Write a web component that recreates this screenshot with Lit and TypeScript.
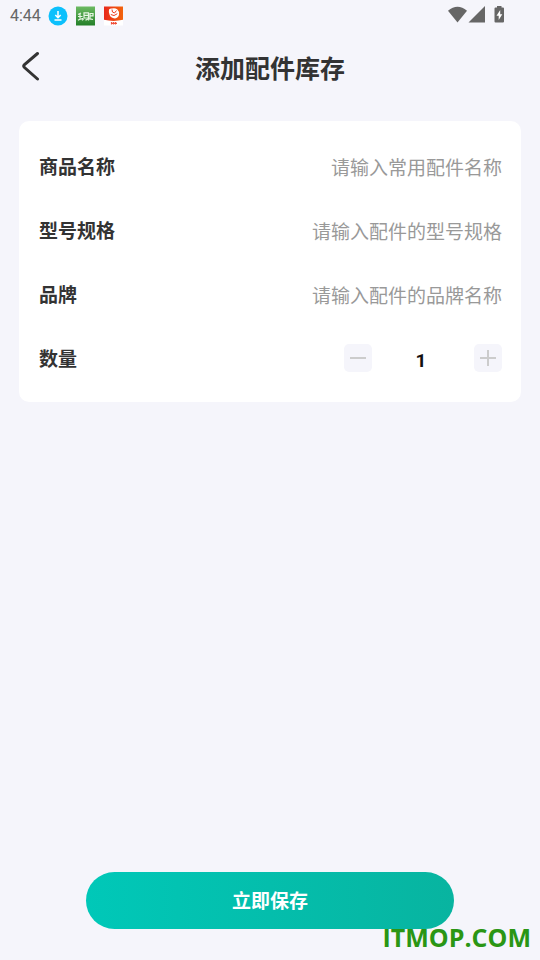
import { LitElement, html, css } from "lit";
import { customElement, property, state } from "lit/decorators.js";

@customElement("status-bar")
class StatusBar extends LitElement {
  static styles = css`
    :host {
      display: flex;
      align-items: center;
      height: 31px;
      padding: 0 32px 0 10px;
      color: #666666;
      font: 400 16px/32px Roboto, sans-serif;
    }
    .apps { display: flex; gap: 8px; margin-left: 7px; }
    .system { display: flex; margin-left: auto; padding-bottom: 2px; }
    svg { display: block; }
  `;

  render() {
    return html`
      <span>4:44</span>
      <div class="apps">
        <svg width="20" height="20" viewBox="0 0 20 20">
          <circle cx="10" cy="10" r="9.5" fill="#0cc0fc" />
          <path d="M10 5v6.500M7.300 9l2.700 2.700L12.700 9M6.500 14h7" fill="none" stroke="#fff" stroke-width="1.500" />
        </svg>
        <svg width="20" height="20" viewBox="0 0 20 20">
          <defs>
            <linearGradient id="leaf" x1="0" y1="0" x2="0" y2="1">
              <stop offset="0" stop-color="#6cba62" /><stop offset="1" stop-color="#237f28" />
            </linearGradient>
          </defs>
          <rect y="0.500" width="19" height="19" fill="url(#leaf)" />
          <path d="M2 8.500l3-1.500M4 7.500v5M2 10.500h4.500M8 6.800h4.500V12H8zM8 9.400h4.500M14 13V7.500h3v2.300h-3M2 14.300q3-2.300 6-1M9.500 14.300q3-2.300 7.500-.8M6.500 12v2.500M12.500 12v2.500" fill="none" stroke="#e8f6e4" stroke-width="1.200" />
        </svg>
        <svg width="20" height="20" viewBox="0 0 20 20">
          <defs>
            <linearGradient id="flame" x1="0" y1="0" x2="1" y2="0">
              <stop offset="0" stop-color="#e8271c" /><stop offset="1" stop-color="#f2640c" />
            </linearGradient>
          </defs>
          <rect y="0.500" width="19" height="19" fill="#fff" />
          <path d="M0 .5h19v13.300Q9.500 16 0 13.800z" fill="url(#flame)" />
          <path d="M5 3.500q1.500-1.500 3-1 3-.8 5.200.8 2.500 2.300 1.800 5.500-.8 3.200-4 3.600Q6.500 12.200 5.500 8.500 4.500 6 5 3.500z" fill="#fff" />
          <path d="M8 3.500q-.3 3.300 2.500 3.500l2-2.500M6.800 8.500q3.200 2.500 6.500-.8" fill="none" stroke="#ec3c1c" stroke-width="1" />
          <path d="M7.500 16v2.500M9.500 16v2.500M11.500 16v2.500M7 17.300h6" stroke="#f0503c" stroke-width="1.200" />
        </svg>
      </div>
      <div class="system">
        <svg width="60" height="20" viewBox="0 0 60 20" fill="#666666">
          <path d="M0 5.700Q9.500-2.300 19 5.700L9.500 17.500z" />
          <path d="M20.500 17.500 37 1v16.500z" />
          <path d="M49 1h4.500v1.500H55q1 0 1 1V16.500q0 1-1 1h-7.500q-1 0-1-1V3.500q0-1 1-1H49z" />
          <path d="M52.200 5 48.500 10.800h2.200V15l3.600-5.800h-2.100z" fill="#fff" />
        </svg>
      </div>
    `;
  }
}

@customElement("quantity-stepper")
class QuantityStepper extends LitElement {
  @property({ type: Number }) value = 1;

  static styles = css`
    :host { display: flex; align-items: center; justify-content: space-between; width: 158px; }
    button {
      width: 28px;
      height: 28px;
      padding: 0;
      border: 0;
      border-radius: 5px;
      background: #f5f5fb;
      cursor: pointer;
    }
    svg { display: block; margin: auto; }
    input {
      width: 60px;
      height: 28px;
      padding: 4px 4px 0 0;
      box-sizing: border-box;
      border: 0;
      background: none;
      color: #111111;
      text-align: center;
      font: 700 19px/24px Roboto, sans-serif;
    }
  `;

  private step(delta: number) {
    this.value = Math.max(1, this.value + delta);
  }

  render() {
    return html`
      <button type="button" aria-label="减少" @click=${() => this.step(-1)}>
        <svg width="16" height="16" viewBox="0 0 16 16"><path d="M0 8h16" stroke="#cccccc" stroke-width="2" /></svg>
      </button>
      <input aria-label="数量" inputmode="numeric" .value=${String(this.value)} />
      <button type="button" aria-label="增加" @click=${() => this.step(1)}>
        <svg width="16" height="16" viewBox="0 0 16 16"><path d="M0 8h16M8 0v16" stroke="#cccccc" stroke-width="2" /></svg>
      </button>
    `;
  }
}

@customElement("app-root")
class AppRoot extends LitElement {
  @state() private fields = [
    { id: "name", label: "商品名称", hint: "请输入常用配件名称" },
    { id: "spec", label: "型号规格", hint: "请输入配件的型号规格" },
    { id: "brand", label: "品牌", hint: "请输入配件的品牌名称" },
  ];

  static styles = css`
    :host {
      display: flex;
      flex-direction: column;
      position: relative;
      min-height: 100vh;
      box-sizing: border-box;
      background: #f5f5fb;
      color: #333333;
      font-family: "Noto Sans CJK SC", sans-serif;
    }
    header {
      display: grid;
      grid-template-columns: 60px 1fr 60px;
      align-items: center;
      height: 70px;
    }
    .back {
      width: 60px;
      height: 60px;
      padding: 0;
      border: 0;
      background: none;
      cursor: pointer;
    }
    .back svg { display: block; margin: auto; }
    h1 {
      margin: 0;
      padding-top: 2px;
      text-align: center;
      font-size: 25px;
      line-height: 36px;
      font-weight: 700;
    }
    form { display: flex; flex-direction: column; flex: 1; }
    .card {
      margin: 20px 19px 0;
      padding: 13px 19px 12px 20px;
      border-radius: 10px;
      background: #ffffff;
    }
    .row {
      display: flex;
      align-items: center;
      justify-content: space-between;
      gap: 20px;
      height: 64px;
      font-size: 19px;
      line-height: 28px;
    }
    .label { font-weight: 700; }
    .text {
      flex: 1;
      min-width: 0;
      height: 32px;
      padding: 0;
      border: 0;
      background: none;
      color: #333333;
      font: inherit;
      text-align: right;
    }
    .text::placeholder { color: #999999; opacity: 1; }
    .save {
      width: 68%;
      height: 57px;
      margin: auto auto 31px;
      padding: 0 0 2px;
      border: 0;
      border-radius: 29px;
      background: linear-gradient(90deg, #00c8b8, #08b4a0);
      color: #ffffff;
      font: 700 19px/28px "Noto Sans CJK SC", sans-serif;
      cursor: pointer;
    }
    .mark {
      position: absolute;
      right: 9px;
      bottom: 5px;
      color: #2a9614;
      font: 700 25px/36px "Open Sans", "Noto Sans", sans-serif;
    }
  `;

  render() {
    return html`
      <status-bar></status-bar>
      <header>
        <button class="back" type="button" aria-label="返回">
          <svg width="20" height="30" viewBox="0 0 20 30">
            <path d="M17.500 2.500 4.500 13.500Q3 15 4.500 16.500L17.500 28" fill="none" stroke="#333333" stroke-width="3" stroke-linecap="round" />
          </svg>
        </button>
        <h1>添加配件库存</h1>
      </header>
      <form @submit=${(e: Event) => e.preventDefault()}>
        <div class="card">
          ${this.fields.map(
            (f) => html`
              <div class="row">
                <label class="label" for=${f.id}>${f.label}</label>
                <input class="text" id=${f.id} placeholder=${f.hint} />
              </div>
            `
          )}
          <div class="row">
            <span class="label">数量</span>
            <quantity-stepper></quantity-stepper>
          </div>
        </div>
        <button class="save" type="submit">立即保存</button>
      </form>
      <span class="mark">ITMOP.COM</span>
    `;
  }
}
